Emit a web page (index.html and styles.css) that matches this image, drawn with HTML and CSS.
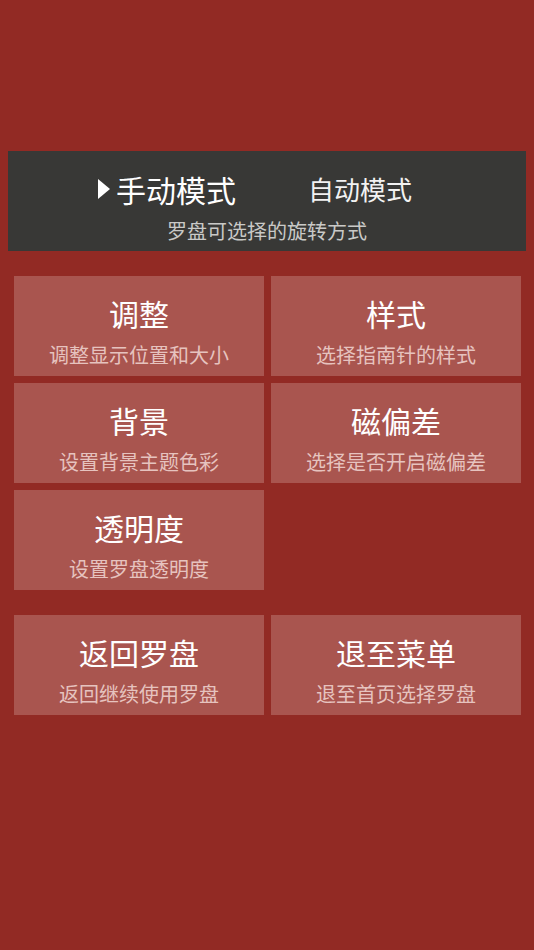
FILE: index.html
```html
<!DOCTYPE html>
<html lang="zh-CN">
<head>
<meta charset="utf-8">
<title>设置</title>
<link rel="stylesheet" href="styles.css">
</head>
<body>
<div class="page">
  <section class="mode-panel">
    <div class="mode-row">
      <div class="mode mode-active"><span class="caret"></span><span class="mode-label">手动模式</span></div>
      <div class="mode mode-idle"><span class="mode-label">自动模式</span></div>
    </div>
    <div class="mode-desc">罗盘可选择的旋转方式</div>
  </section>

  <section class="grid">
    <div class="card"><div class="card-title">调整</div><div class="card-sub">调整显示位置和大小</div></div>
    <div class="card"><div class="card-title">样式</div><div class="card-sub">选择指南针的样式</div></div>
    <div class="card"><div class="card-title">背景</div><div class="card-sub">设置背景主题色彩</div></div>
    <div class="card"><div class="card-title">磁偏差</div><div class="card-sub">选择是否开启磁偏差</div></div>
    <div class="card"><div class="card-title">透明度</div><div class="card-sub">设置罗盘透明度</div></div>
  </section>

  <section class="grid actions">
    <div class="card"><div class="card-title">返回罗盘</div><div class="card-sub">返回继续使用罗盘</div></div>
    <div class="card"><div class="card-title">退至菜单</div><div class="card-sub">退至首页选择罗盘</div></div>
  </section>
</div>
</body>
</html>
```
FILE: styles.css
```css
html, body {
  margin: 0;
  padding: 0;
}
body {
  background: #922a24;
  width: 534px;
  height: 950px;
  overflow: hidden;
  font-family: "Noto Sans CJK SC", "Noto Sans", sans-serif;
}
.page {
  padding-top: 151px;
}
.mode-panel {
  margin: 0 8px;
  height: 100px;
  background: #383836;
  box-sizing: border-box;
  padding-top: 19px;
  display: flex;
  flex-direction: column;
  align-items: center;
}
.mode-row {
  display: flex;
  align-items: center;
  gap: 72px;
  padding-right: 24px;
  height: 38px;
}
.mode {
  display: flex;
  align-items: center;
}
.caret {
  width: 0;
  height: 0;
  border-top: 10px solid transparent;
  border-bottom: 10px solid transparent;
  border-left: 12px solid #ffffff;
  margin-right: 6px;
}
.mode-active .mode-label {
  font-size: 30px;
  line-height: 38px;
  color: #ffffff;
}
.mode-idle .mode-label {
  font-size: 26px;
  line-height: 38px;
  color: #f2f2f2;
}
.mode-desc {
  margin-top: 11px;
  font-size: 20px;
  line-height: 24px;
  color: #c9c9c7;
}
.grid {
  margin: 25px 0 0 14px;
  display: grid;
  grid-template-columns: 250px 250px;
  grid-auto-rows: 100px;
  gap: 7px;
}
.actions {
  margin-top: 25px;
}
.card {
  background: #a9554f;
  box-sizing: border-box;
  padding-top: 19px;
  display: flex;
  flex-direction: column;
  align-items: center;
}
.card-title {
  font-size: 30px;
  line-height: 36px;
  color: #ffffff;
}
.card-sub {
  margin-top: 12px;
  font-size: 20px;
  line-height: 24px;
  color: #e6c3bf;
}
```
